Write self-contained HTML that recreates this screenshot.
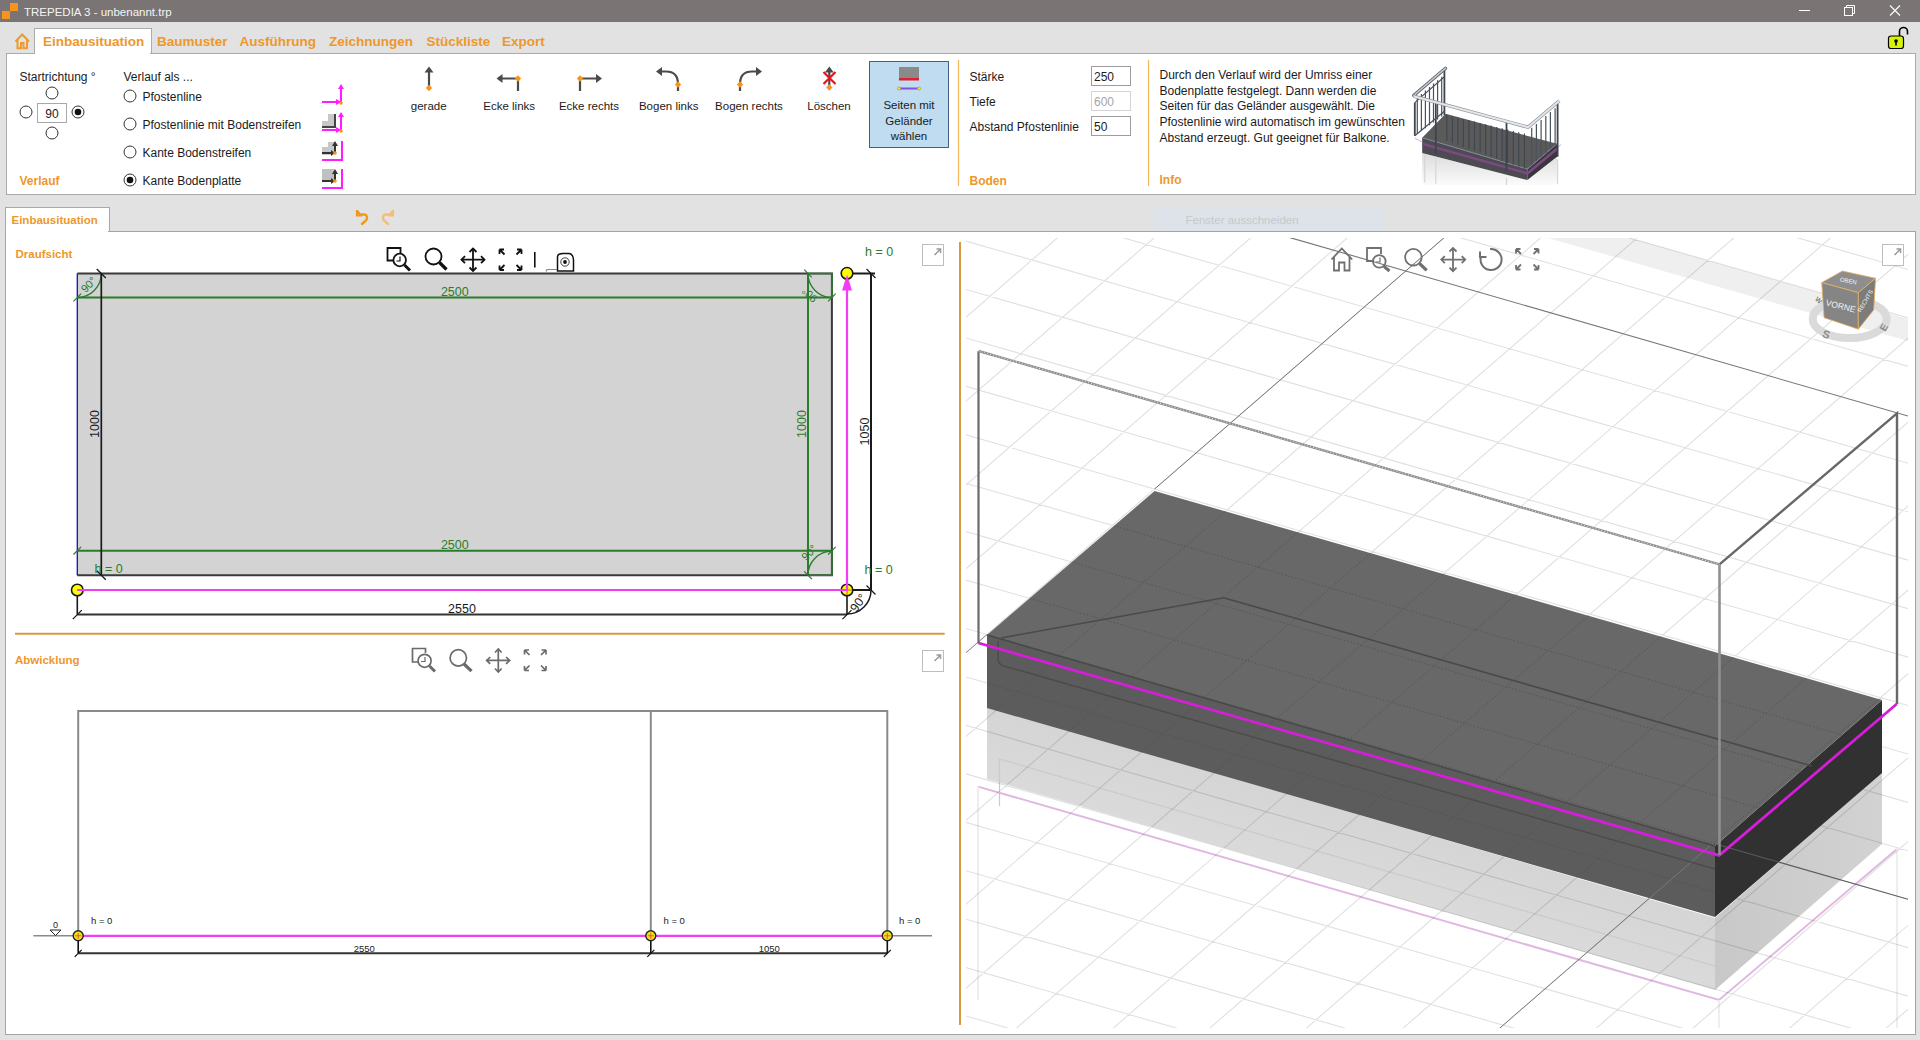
<!DOCTYPE html>
<html lang="de"><head><meta charset="utf-8"><title>TREPEDIA 3 - unbenannt.trp</title>
<style>
html,body{margin:0;padding:0;}
body{width:1920px;height:1040px;overflow:hidden;background:#e2e2e2;font-family:"Liberation Sans", sans-serif;position:relative;}
.t{position:absolute;line-height:1;white-space:pre;}
.abs{position:absolute;}
svg{position:absolute;overflow:visible;}
</style></head><body>

<div class="abs" id="titlebar" style="left:0;top:0;width:1920px;height:22px;background:#7a7474;"></div>
<div class="abs" style="left:2px;top:11px;width:8px;height:8px;background:#f7941d;"></div>
<div class="abs" style="left:10px;top:3px;width:8px;height:8px;background:#f7941d;"></div>
<div class="t" style="left:24.0px;top:6.9px;font-size:11.5px;color:#f4f4f4;">TREPEDIA 3 - unbenannt.trp</div>
<svg style="left:0;top:0" width="1920" height="22">
<line x1="1799" y1="10.5" x2="1810" y2="10.5" stroke="#fff" stroke-width="1"/>
<rect x="1844.5" y="7.5" width="8" height="8" fill="none" stroke="#fff" stroke-width="1"/>
<path d="M1846.5 7.5 V5.5 H1854.5 V13.5 H1852.5" fill="none" stroke="#fff" stroke-width="1"/>
<path d="M1890 5.5 L1900 15.5 M1900 5.5 L1890 15.5" stroke="#fff" stroke-width="1.1"/>
</svg>
<div class="abs" style="left:0;top:22px;width:1920px;height:32px;background:#e2e2e2;"></div>
<div class="abs" style="left:34px;top:28px;width:116px;height:26px;background:#fff;border:1px solid #ababab;border-bottom:none;"></div>
<svg style="left:0;top:0" width="60" height="60">
<path d="M15.5 41.5 L22.2 34.5 L29 41.5 M17.5 39.5 V48.2 H21 V43 H23.5 V48.2 H27 V39.5" fill="none" stroke="#ef9a2a" stroke-width="2" stroke-linejoin="miter"/>
</svg>
<div class="t" style="left:43.0px;top:35.2px;font-size:13.5px;color:#ee972c;font-weight:bold;">Einbausituation</div>
<div class="t" style="left:157.0px;top:35.2px;font-size:13.5px;color:#ee972c;font-weight:bold;">Baumuster</div>
<div class="t" style="left:239.5px;top:35.2px;font-size:13.5px;color:#ee972c;font-weight:bold;">Ausführung</div>
<div class="t" style="left:329.0px;top:35.2px;font-size:13.5px;color:#ee972c;font-weight:bold;">Zeichnungen</div>
<div class="t" style="left:426.5px;top:35.2px;font-size:13.5px;color:#ee972c;font-weight:bold;">Stückliste</div>
<div class="t" style="left:502.0px;top:35.2px;font-size:13.5px;color:#ee972c;font-weight:bold;">Export</div>
<svg style="left:0;top:0" width="1920" height="60">
<path d="M1899.5 36 V31.5 A4 4 0 0 1 1907.5 31.5 V34.5" fill="none" stroke="#000" stroke-width="1.6"/>
<rect x="1888.5" y="36" width="15" height="12.5" rx="2.5" fill="#d7f20a" stroke="#000" stroke-width="1.2"/>
<circle cx="1896" cy="41" r="1.8" fill="#000"/><rect x="1895.2" y="41" width="1.6" height="4.5" fill="#000"/>
</svg>
<div class="abs" id="ribbon" style="left:6px;top:53px;width:1908px;height:140px;background:#fff;border:1px solid #ababab;"></div>
<div class="abs" style="left:35px;top:52px;width:115px;height:2px;background:#fff;"></div>
<svg style="left:0;top:0" width="400" height="200"><circle cx="52" cy="93" r="6" fill="#fff" stroke="#333" stroke-width="1"/><circle cx="26" cy="112" r="6" fill="#fff" stroke="#333" stroke-width="1"/><circle cx="78" cy="112" r="6" fill="#fff" stroke="#333" stroke-width="1"/><circle cx="78" cy="112" r="3.3" fill="#111"/><circle cx="52" cy="133" r="6" fill="#fff" stroke="#333" stroke-width="1"/><rect x="37.5" y="103.5" width="29" height="19" fill="#fff" stroke="#a8a8a8" stroke-width="1"/><circle cx="130" cy="96" r="6" fill="#fff" stroke="#333" stroke-width="1"/><circle cx="130" cy="124" r="6" fill="#fff" stroke="#333" stroke-width="1"/><circle cx="130" cy="152" r="6" fill="#fff" stroke="#333" stroke-width="1"/><circle cx="130" cy="180" r="6" fill="#fff" stroke="#333" stroke-width="1"/><circle cx="130" cy="180" r="3.3" fill="#111"/><g>
<path d="M322 102 H340" stroke="#ff1dff" stroke-width="2"/><path d="M336 99 L341 102 L336 105Z" fill="#ff1dff"/>
<path d="M341 103 V87" stroke="#ff1dff" stroke-width="2"/><path d="M338 89 L341 84 L344 89Z" fill="#ff1dff"/>
<circle cx="341" cy="103" r="1.8" fill="#f7941d"/>
</g>
<g>
<rect x="322" y="121" width="12" height="5" fill="#c8c8c8"/><rect x="328" y="114" width="6" height="12" fill="#c8c8c8"/>
<path d="M322 127 H335 V114" fill="none" stroke="#444" stroke-width="2"/>
<path d="M322 130 H340" stroke="#ff1dff" stroke-width="2"/><path d="M336 127 L341 130 L336 133Z" fill="#ff1dff"/>
<path d="M341 131 V115" stroke="#ff1dff" stroke-width="2"/><path d="M338 117 L341 112 L344 117Z" fill="#ff1dff"/>
<circle cx="341" cy="131" r="1.8" fill="#f7941d"/>
</g>
<g>
<rect x="322" y="147" width="10" height="8" fill="#c8c8c8"/><rect x="328" y="142" width="6" height="12" fill="#c8c8c8"/>
<path d="M322 153 H334" stroke="#333" stroke-width="2"/><path d="M331 150 L335 153 L331 156Z" fill="#333"/>
<path d="M335 153 V144" stroke="#333" stroke-width="2"/><path d="M332 146 L335 141 L338 146Z" fill="#333"/>
<circle cx="335" cy="153" r="1.8" fill="#f7941d"/>
<path d="M322 160 H342 V141" fill="none" stroke="#ff1dff" stroke-width="2"/>
</g>
<g>
<rect x="322" y="169" width="12" height="12" fill="#c0c0c0"/>
<path d="M322 181 H334" stroke="#333" stroke-width="2"/><path d="M331 178 L335 181 L331 184Z" fill="#333"/>
<path d="M335 181 V172" stroke="#333" stroke-width="2"/><path d="M332 174 L335 169 L338 174Z" fill="#333"/>
<circle cx="335" cy="181" r="1.8" fill="#f7941d"/>
<path d="M322 188 H342 V169" fill="none" stroke="#ff1dff" stroke-width="2"/>
</g></svg>
<div class="t" style="left:19.5px;top:71.4px;font-size:12px;color:#1b1b1b;">Startrichtung °</div>
<div class="t" style="left:-248.0px;width:600px;text-align:center;top:108.4px;font-size:12px;color:#1b1b1b;">90</div>
<div class="t" style="left:19.5px;top:174.9px;font-size:12px;color:#ee972c;font-weight:bold;">Verlauf</div>
<div class="t" style="left:123.5px;top:71.4px;font-size:12px;color:#1b1b1b;">Verlauf als ...</div>
<div class="t" style="left:142.5px;top:90.9px;font-size:12px;color:#1b1b1b;">Pfostenline</div>
<div class="t" style="left:142.5px;top:118.9px;font-size:12px;color:#1b1b1b;">Pfostenlinie mit Bodenstreifen</div>
<div class="t" style="left:142.5px;top:146.9px;font-size:12px;color:#1b1b1b;">Kante Bodenstreifen</div>
<div class="t" style="left:142.5px;top:174.9px;font-size:12px;color:#1b1b1b;">Kante Bodenplatte</div>
<svg style="left:0;top:0" width="1000" height="200"><path d="M429 88 V71" stroke="#4a4a4a" stroke-width="2.2"/><path d="M424.5 72.5 L429 66.5 L433.5 72.5Z" fill="#4a4a4a"/><path d="M429 84.8 L432.2 88 L429 91.2 L425.8 88Z" fill="#f7941d"/><path d="M500 78.5 H518 V91" fill="none" stroke="#4a4a4a" stroke-width="2.2"/><path d="M502.5 74 L496.5 78.5 L502.5 83Z" fill="#4a4a4a"/><path d="M518 75.3 L521.2 78.5 L518 81.7 L514.8 78.5Z" fill="#f7941d"/><path d="M580 91 V78.5 H598" fill="none" stroke="#4a4a4a" stroke-width="2.2"/><path d="M596 74 L602 78.5 L596 83Z" fill="#4a4a4a"/><path d="M580 75.3 L583.2 78.5 L580 81.7 L576.8 78.5Z" fill="#f7941d"/><path d="M678 91 V84 C678 76 674 71.5 666 71.5 H660" fill="none" stroke="#4a4a4a" stroke-width="2.2"/><path d="M662 67 L656 71.5 L662 76Z" fill="#4a4a4a"/><path d="M678 81.3 L681.2 84.5 L678 87.7 L674.8 84.5Z" fill="#f7941d"/><path d="M740 91 V84 C740 76 744 71.5 752 71.5 H758" fill="none" stroke="#4a4a4a" stroke-width="2.2"/><path d="M756 67 L762 71.5 L756 76Z" fill="#4a4a4a"/><path d="M740 81.3 L743.2 84.5 L740 87.7 L736.8 84.5Z" fill="#f7941d"/><path d="M829.3 88 V71" stroke="#4a4a4a" stroke-width="2.2"/><path d="M824.8 72.5 L829.3 66.5 L833.8 72.5Z" fill="#4a4a4a"/><path d="M829.3 84.3 L832.5 87.5 L829.3 90.7 L826.0999999999999 87.5Z" fill="#f7941d"/><path d="M823.5 72 L835.5 84 M835.5 72 L823.5 84" stroke="#e8141c" stroke-width="2.2"/><rect x="869.5" y="61.5" width="79" height="86" fill="#bfdcf1" stroke="#44607e" stroke-width="1"/><rect x="899" y="67" width="20" height="11" fill="#8a8a8a"/><rect x="899" y="78" width="20" height="2.5" fill="#e0202a"/><path d="M899 88.5 H919" stroke="#8050e0" stroke-width="2"/><circle cx="899" cy="88.5" r="1.6" fill="#f4e040" stroke="#b09030" stroke-width="0.6"/><circle cx="919" cy="88.5" r="1.6" fill="#f4e040" stroke="#b09030" stroke-width="0.6"/><path d="M958.5 60 V186" stroke="#f2b75a" stroke-width="1.2"/></svg>
<div class="t" style="left:128.7px;width:600px;text-align:center;top:100.6px;font-size:11.5px;color:#1b1b1b;">gerade</div>
<div class="t" style="left:209.2px;width:600px;text-align:center;top:100.6px;font-size:11.5px;color:#1b1b1b;">Ecke links</div>
<div class="t" style="left:289.0px;width:600px;text-align:center;top:100.6px;font-size:11.5px;color:#1b1b1b;">Ecke rechts</div>
<div class="t" style="left:368.7px;width:600px;text-align:center;top:100.6px;font-size:11.5px;color:#1b1b1b;">Bogen links</div>
<div class="t" style="left:449.0px;width:600px;text-align:center;top:100.6px;font-size:11.5px;color:#1b1b1b;">Bogen rechts</div>
<div class="t" style="left:529.0px;width:600px;text-align:center;top:100.6px;font-size:11.5px;color:#1b1b1b;">Löschen</div>
<div class="t" style="left:609.0px;width:600px;text-align:center;top:100.4px;font-size:11.5px;color:#1b1b1b;">Seiten mit</div>
<div class="t" style="left:609.0px;width:600px;text-align:center;top:116.2px;font-size:11.5px;color:#1b1b1b;">Geländer</div>
<div class="t" style="left:609.0px;width:600px;text-align:center;top:130.7px;font-size:11.5px;color:#1b1b1b;">wählen</div>
<svg style="left:0;top:0" width="1200" height="200"><rect x="1091.5" y="66.5" width="39" height="19" fill="#fff" stroke="#9c9c9c"/><rect x="1091.5" y="91.5" width="39" height="19" fill="#fff" stroke="#d4d4d4"/><rect x="1091.5" y="116.5" width="39" height="19" fill="#fff" stroke="#9c9c9c"/><path d="M1148.5 60 V186" stroke="#f2b75a" stroke-width="1.2"/></svg>
<div class="t" style="left:969.5px;top:71.0px;font-size:12px;color:#1b1b1b;">Stärke</div>
<div class="t" style="left:969.5px;top:96.3px;font-size:12px;color:#1b1b1b;">Tiefe</div>
<div class="t" style="left:969.5px;top:121.4px;font-size:12px;color:#1b1b1b;">Abstand Pfostenlinie</div>
<div class="t" style="left:1094.0px;top:71.0px;font-size:12px;color:#1b1b1b;">250</div>
<div class="t" style="left:1094.0px;top:96.3px;font-size:12px;color:#a6a6a6;">600</div>
<div class="t" style="left:1094.0px;top:121.4px;font-size:12px;color:#1b1b1b;">50</div>
<div class="t" style="left:969.5px;top:175.4px;font-size:12px;color:#ee972c;font-weight:bold;">Boden</div>
<div class="t" style="left:1159.5px;top:68.7px;font-size:12px;color:#1b1b1b;">Durch den Verlauf wird der Umriss einer</div>
<div class="t" style="left:1159.5px;top:84.5px;font-size:12px;color:#1b1b1b;">Bodenplatte festgelegt. Dann werden die</div>
<div class="t" style="left:1159.5px;top:100.2px;font-size:12px;color:#1b1b1b;">Seiten für das Geländer ausgewählt. Die</div>
<div class="t" style="left:1159.5px;top:116.0px;font-size:12px;color:#1b1b1b;">Pfostenlinie wird automatisch im gewünschten</div>
<div class="t" style="left:1159.5px;top:131.7px;font-size:12px;color:#1b1b1b;">Abstand erzeugt. Gut geeignet für Balkone.</div>
<div class="t" style="left:1159.5px;top:174.4px;font-size:12px;color:#ee972c;font-weight:bold;">Info</div>
<svg style="left:0;top:0" width="1600" height="200"><defs><linearGradient id="brefl" x1="0" y1="0" x2="0" y2="1"><stop offset="0" stop-color="#dcdcdc"/><stop offset="1" stop-color="#fbfbfb"/></linearGradient></defs><path d="M1422.2 153.1 L1527.4 180.1 L1557.0 156.7 L1557.0 185.0 L1527.4 185.0 L1422.2 185.0Z" fill="url(#brefl)"/><path d="M1424.7 155.5 L1424.7 182.6 M1435.8 158.0 L1435.8 183.8 M1506.5 177.7 L1506.5 185.0 M1557.6 159.2 L1557.6 183.8" stroke="#d6d6d6" stroke-width="1.2"/><path d="M1422.2 137.7 L1445.6 113.7 L1557.0 143.8 L1527.4 169.1Z" fill="#5a5a5a"/><path d="M1422.2 137.7 L1527.4 169.1 L1527.4 180.1 L1422.2 153.1Z" fill="#4e4a52"/><path d="M1527.4 169.1 L1557.0 143.8 L1557.0 156.7 L1527.4 180.1Z" fill="#3a363e"/><path d="M1422.2 143.8 L1527.4 173.4 M1527.4 173.4 L1557.0 148.7" stroke="#7a4a80" stroke-width="2.6"/><path d="M1422.2 137.7 L1527.4 169.1 L1557.0 143.8" fill="none" stroke="#7a8a96" stroke-width="1"/><path d="M1414.8 138.3 L1422.2 142.0 M1557.0 148.1 L1561.3 144.4" stroke="#d8a8e0" stroke-width="1"/><path d="M1446.8 114.9 L1446.8 140.7 M1452.4 116.2 L1452.4 142.7 M1457.9 117.6 L1457.9 144.7 M1463.4 118.9 L1463.4 146.7 M1469.0 120.2 L1469.0 148.7 M1474.5 121.6 L1474.5 150.7 M1480.1 122.9 L1480.1 152.7 M1485.6 124.2 L1485.6 154.7 M1491.1 125.5 L1491.1 156.7 M1496.7 126.9 L1496.7 158.7 M1502.2 128.2 L1502.2 160.7 M1507.7 129.5 L1507.7 162.7 M1513.3 130.9 L1513.3 164.7 M1518.8 132.2 L1518.8 166.7 M1524.4 133.5 L1524.4 168.7" stroke="#3e4650" stroke-width="1.1"/><path d="M1417.3 97.4 L1417.3 134.1 M1421.4 94.0 L1421.4 131.1 M1425.4 90.5 L1425.4 128.2 M1429.5 87.1 L1429.5 125.3 M1433.5 83.6 L1433.5 122.4 M1437.6 80.2 L1437.6 119.4 M1441.7 76.7 L1441.7 116.5" stroke="#4a525c" stroke-width="1.2"/><path d="M1531.7 127.8 L1531.7 164.7 M1536.4 123.9 L1536.4 160.8 M1541.1 120.0 L1541.1 156.9 M1545.8 116.0 L1545.8 152.9 M1550.4 112.1 L1550.4 149.0 M1555.1 108.2 L1555.1 145.1" stroke="#4a525c" stroke-width="1.2"/><path d="M1444.4 69.4 L1444.4 114.9 M1414.8 102.6 L1414.8 135.8 M1435.8 102.6 L1435.8 154.3 M1506.5 122.3 L1506.5 171.5 M1557.6 103.8 L1557.6 156.7" stroke="#3c4450" stroke-width="1.8"/><path d="M1414.8 135.8 L1444.4 111.2 M1414.8 102.6 L1444.4 76.8" stroke="#4a525c" stroke-width="1.2"/><path d="M1413.6 95.5 L1445.6 68.2" stroke="#5a626c" stroke-width="3.2" stroke-linecap="round"/><path d="M1413.6 95.5 L1445.6 68.2" stroke="#c4c8cc" stroke-width="1.6" stroke-linecap="round"/><path d="M1413.6 96.2 L1528.0 127.2 L1559.4 100.8" fill="none" stroke="#8a9098" stroke-width="3.4" stroke-linejoin="round"/><path d="M1413.6 96.2 L1528.0 127.2 L1559.4 100.8" fill="none" stroke="#e4e6e8" stroke-width="2" stroke-linejoin="round"/></svg>
<div class="abs" style="left:5px;top:207px;width:103px;height:26px;background:#fff;border:1px solid #a8a8a8;border-bottom:none;"></div>
<div class="t" style="left:11.5px;top:214.9px;font-size:11.5px;color:#ee972c;font-weight:bold;">Einbausituation</div>
<svg style="left:0;top:0" width="420" height="240">
<path d="M357.5 211.5 L360 214.5 H364 C367 214.5 368 218 366 220.5 L362 224" fill="none" stroke="#f09a1a" stroke-width="2.4" stroke-linecap="round"/>
<path d="M357 210 V215.5 H362" fill="none" stroke="#f09a1a" stroke-width="2.2"/>
<path d="M392.5 211.5 L390 214.5 H386 C383 214.5 382 218 384 220.5 L388 224" fill="none" stroke="#f5bd77" stroke-width="2.4" stroke-linecap="round"/>
<path d="M393 210 V215.5 H388" fill="none" stroke="#f5bd77" stroke-width="2.2"/>
</svg>
<div class="abs" style="left:1153px;top:208px;width:230px;height:23px;background:#dde3e9;"></div>
<div class="t" style="left:1185.5px;top:214.9px;font-size:11.5px;color:#c6c9cc;">Fenster ausschneiden</div>
<div class="abs" id="content" style="left:5px;top:231px;width:1909px;height:802px;background:#fff;border:1px solid #a4a4a4;"></div>
<div class="abs" style="left:6px;top:230px;width:102px;height:2px;background:#fff;"></div>
<div class="t" style="left:15.5px;top:248.6px;font-size:11.5px;color:#ee972c;font-weight:bold;">Draufsicht</div>
<div class="t" style="left:15.0px;top:654.9px;font-size:11.5px;color:#ee972c;font-weight:bold;">Abwicklung</div>
<svg id="draufsicht" style="left:0;top:0" width="960" height="640"><g fill="none" stroke="#111" stroke-width="1.8">
<path d="M394 260.5 H387.5 V248 H400.5 V253"/>
<circle cx="399.7" cy="260" r="6.3"/><path d="M404.5 265 L410 270.5" stroke-width="3"/>
<path d="M396.5 261 H400 V256.5" stroke-width="1.2"/>
<circle cx="433.5" cy="256.5" r="8"/><path d="M439.5 262.5 L446.5 269.5" stroke-width="3.2"/>
<path d="M473 248.5 V271 M461.5 259.7 H484.5"/>
<path d="M469.5 252 L473 248.5 L476.5 252 M469.5 267.5 L473 271 L476.5 267.5 M465 256.2 L461.5 259.7 L465 263.2 M481 256.2 L484.5 259.7 L481 263.2"/>
<path d="M499.5 249.5 L504.5 254.5 M499.5 249.5 V254 M499.5 249.5 H504"/>
<path d="M521.5 249.5 L516.5 254.5 M521.5 249.5 V254 M521.5 249.5 H517"/>
<path d="M499.5 270 L504.5 265 M499.5 270 V265.5 M499.5 270 H504"/>
<path d="M521.5 270 L516.5 265 M521.5 270 V265.5 M521.5 270 H517"/>
<path d="M534.8 252 V267.5" stroke-width="1.6"/>
<path d="M557.5 271 V257 C557.5 254 560 253.5 563 253.5 H569 C572 253.5 573.5 257 573.5 260 V271 Z" stroke-width="1.5"/>
<circle cx="565" cy="262" r="4.2" stroke-width="0.8"/><circle cx="565" cy="262" r="1" fill="#111"/>
<path d="M546 271.5 L547 269.5 H557" stroke="#888" stroke-width="1.2"/>
</g><rect x="77.3" y="273.5" width="754.6" height="301.7" fill="#d3d3d3"/><path d="M77.3 273.5 H831.9 V575.2 H77.3" fill="none" stroke="#3a3a3a" stroke-width="2"/><path d="M77.3 273.5 V575.2" stroke="#1010c0" stroke-width="1.3"/><path d="M77.3 297.5 H831.9 M77.3 550.7 H831.9 M808 273.5 V575.2" stroke="#2a7d2a" stroke-width="2"/><path d="M808 273.5 H831.9 V297.5" fill="none" stroke="#2a7d2a" stroke-width="1.6"/><path d="M808 575.2 H831.9 V550.7" fill="none" stroke="#2a7d2a" stroke-width="1.6"/><path d="M101.3 273.5 A24 24 0 0 1 77.3 297.5" fill="none" stroke="#2a7d2a" stroke-width="1.3"/><path d="M808 273.5 A24 24 0 0 0 831.9 297.5" fill="none" stroke="#2a7d2a" stroke-width="1.3"/><path d="M808 575.2 A24 24 0 0 1 831.9 551.2" fill="none" stroke="#2a7d2a" stroke-width="1.3"/><path d="M73.5 301.3 L81.1 293.7" stroke="#2a7d2a" stroke-width="1.2"/><path d="M73.5 554.5 L81.1 546.9000000000001" stroke="#2a7d2a" stroke-width="1.2"/><path d="M828.1 301.3 L835.6999999999999 293.7" stroke="#2a7d2a" stroke-width="1.2"/><path d="M828.1 554.5 L835.6999999999999 546.9000000000001" stroke="#2a7d2a" stroke-width="1.2"/><path d="M804.2 269.7 L811.8 277.3" stroke="#2a7d2a" stroke-width="1.2"/><path d="M804.2 571.4000000000001 L811.8 579.0" stroke="#2a7d2a" stroke-width="1.2"/><path d="M101.3 273.5 V575.2" stroke="#1a1a1a" stroke-width="1.7"/><path d="M96.8 269.0 L105.8 278.0" stroke="#1a1a1a" stroke-width="1.3"/><path d="M96.8 570.7 L105.8 579.7" stroke="#1a1a1a" stroke-width="1.3"/><path d="M847 273.5 H875 M871 273.5 V590 M847 590 H871" fill="none" stroke="#1a1a1a" stroke-width="2"/><path d="M866.5 269.0 L875.5 278.0" stroke="#1a1a1a" stroke-width="1.3"/><path d="M866.5 585.5 L875.5 594.5" stroke="#1a1a1a" stroke-width="1.3"/><path d="M77.3 614.6 H847" stroke="#333" stroke-width="2"/><path d="M77.3 590 V614.6 M847 590 V614.6" stroke="#1a1a1a" stroke-width="1.6"/><path d="M72.8 619.1 L81.8 610.1" stroke="#1a1a1a" stroke-width="1.3"/><path d="M842.5 619.1 L851.5 610.1" stroke="#1a1a1a" stroke-width="1.3"/><path d="M871 590 A24 24 0 0 1 847 614" fill="none" stroke="#1a1a1a" stroke-width="1.5"/><circle cx="77.3" cy="590" r="5.8" fill="#ffff00" stroke="#1a1a1a" stroke-width="1.6"/><circle cx="847" cy="590" r="5.8" fill="#ffff00" stroke="#1a1a1a" stroke-width="1.6"/><circle cx="847" cy="273.3" r="5.8" fill="#ffff00" stroke="#1a1a1a" stroke-width="1.6"/><path d="M77.3 590 H83" stroke="#f04040" stroke-width="1"/><path d="M847 585 V595 M842 590 H852" stroke="#e05030" stroke-width="1"/><path d="M77.3 590 H847 V284" fill="none" stroke="#f43cf4" stroke-width="2.2"/><path d="M842 290.5 L847 274.5 L852 290.5 Z" fill="#f43cf4"/><text x="454.8" y="295.6" font-size="12.5" fill="#2a7d2a" text-anchor="middle" style="font-family:'Liberation Sans', sans-serif;">2500</text><text x="454.8" y="548.8" font-size="12.5" fill="#2a7d2a" text-anchor="middle" style="font-family:'Liberation Sans', sans-serif;">2500</text><text x="462" y="612.7" font-size="12.5" fill="#1a1a1a" text-anchor="middle" style="font-family:'Liberation Sans', sans-serif;">2550</text><text transform="translate(99.3 424) rotate(-90)" font-size="12.5" fill="#1a1a1a" text-anchor="middle" style="font-family:'Liberation Sans', sans-serif;">1000</text><text transform="translate(805.8 424) rotate(-90)" font-size="12.5" fill="#2a7d2a" text-anchor="middle" style="font-family:'Liberation Sans', sans-serif;">1000</text><text transform="translate(869 431.5) rotate(-90)" font-size="12.5" fill="#1a1a1a" text-anchor="middle" style="font-family:'Liberation Sans', sans-serif;">1050</text><text x="865" y="256.2" font-size="12.5" fill="#2a7d2a" style="font-family:'Liberation Sans', sans-serif;">h = 0</text><text x="864.6" y="573.8" font-size="12.5" fill="#2a7d2a" style="font-family:'Liberation Sans', sans-serif;">h = 0</text><text x="94.6" y="573" font-size="12.5" fill="#2a7d2a" style="font-family:'Liberation Sans', sans-serif;">h = 0</text><text transform="translate(88.5 284.5) rotate(-45)" font-size="11" fill="#2a7d2a" text-anchor="middle" dominant-baseline="central" style="font-family:'Liberation Sans', sans-serif;">90°</text><text transform="translate(809.5 295) rotate(225)" font-size="11" fill="#2a7d2a" text-anchor="middle" dominant-baseline="central" style="font-family:'Liberation Sans', sans-serif;">90°</text><text transform="translate(809 552.5) rotate(-45)" font-size="11" fill="#2a7d2a" text-anchor="middle" dominant-baseline="central" style="font-family:'Liberation Sans', sans-serif;">90°</text><text transform="translate(858.5 603) rotate(-54)" font-size="12.5" fill="#1a1a1a" text-anchor="middle" dominant-baseline="central" style="font-family:'Liberation Sans', sans-serif;">90°</text><rect x="922.5" y="244.5" width="21" height="21" fill="#fff" stroke="#bdbdbd" stroke-width="1"/><path d="M934.5 255 L940 249.5 M936.5 249 H940.5 V253" fill="none" stroke="#9a9a9a" stroke-width="1.5"/><rect x="922.5" y="650.5" width="21" height="21" fill="#fff" stroke="#bdbdbd" stroke-width="1"/><path d="M934.5 661 L940 655.5 M936.5 655 H940.5 V659" fill="none" stroke="#9a9a9a" stroke-width="1.5"/><path d="M15 633.8 H944.7" stroke="#d9993f" stroke-width="2"/></svg>
<svg id="abwicklung" style="left:0;top:0" width="960" height="1040"><g fill="none" stroke="#6a6a6a" stroke-width="1.7">
<path d="M419 662 H412.5 V648.5 H425.5 V653"/>
<circle cx="424.6" cy="660.8" r="6.5"/><path d="M429.5 666 L435 671.5" stroke-width="3"/>
<path d="M421 661.5 H425 V657" stroke-width="1.2"/>
<circle cx="458.3" cy="657.9" r="8.2"/><path d="M464 664 L471.5 671.2" stroke-width="3.2"/>
<path d="M498.3 649 V672 M486.7 660.4 H509.6"/>
<path d="M495 652.5 L498.3 649 L501.6 652.5 M495 668.5 L498.3 672 L501.6 668.5 M490.2 657 L486.7 660.4 L490.2 663.8 M506.1 657 L509.6 660.4 L506.1 663.8"/>
<path d="M524.5 650 L529.5 655 M524.5 650 V654.5 M524.5 650 H529"/>
<path d="M546 650 L541 655 M546 650 V654.5 M546 650 H541.5"/>
<path d="M524.5 670.5 L529.5 665.5 M524.5 670.5 V666 M524.5 670.5 H529"/>
<path d="M546 670.5 L541 665.5 M546 670.5 V666 M546 670.5 H541.5"/>
</g><path d="M78.2 936 V711 H887.3 V936 M650.8 711 V936" fill="none" stroke="#8a8a8a" stroke-width="2"/><path d="M33.3 935.8 H78 M887 935.8 H932" stroke="#8a8a8a" stroke-width="1.6"/><path d="M78.2 935.8 H887.3" stroke="#f43cf4" stroke-width="2.2"/><path d="M78.2 953.3 H887.3" stroke="#333" stroke-width="2"/><path d="M78.2 936 V953.3 M650.8 936 V953.3 M887.3 936 V953.3" stroke="#111" stroke-width="1.6"/><path d="M74.7 956.8 L81.7 949.8" stroke="#111" stroke-width="1.2"/><circle cx="78.2" cy="935.8" r="5" fill="#f0e020" stroke="#222" stroke-width="1.4"/><path d="M75.2 935.8 H81.2 M78.2 933 V939" stroke="#e05030" stroke-width="0.9"/><path d="M647.3 956.8 L654.3 949.8" stroke="#111" stroke-width="1.2"/><circle cx="650.8" cy="935.8" r="5" fill="#f0e020" stroke="#222" stroke-width="1.4"/><path d="M647.8 935.8 H653.8 M650.8 933 V939" stroke="#e05030" stroke-width="0.9"/><path d="M883.8 956.8 L890.8 949.8" stroke="#111" stroke-width="1.2"/><circle cx="887.3" cy="935.8" r="5" fill="#f0e020" stroke="#222" stroke-width="1.4"/><path d="M884.3 935.8 H890.3 M887.3 933 V939" stroke="#e05030" stroke-width="0.9"/><path d="M50 930 H61 L55.5 935.5 Z" fill="#fff" stroke="#222" stroke-width="1"/><text x="55.5" y="928" font-size="9" fill="#222" text-anchor="middle" style="font-family:'Liberation Sans', sans-serif;">0</text><text x="91" y="923.5" font-size="9.5" fill="#222" style="font-family:'Liberation Sans', sans-serif;">h = 0</text><text x="663.5" y="923.5" font-size="9.5" fill="#222" style="font-family:'Liberation Sans', sans-serif;">h = 0</text><text x="899" y="923.5" font-size="9.5" fill="#222" style="font-family:'Liberation Sans', sans-serif;">h = 0</text><text x="364.2" y="952" font-size="9.5" fill="#222" text-anchor="middle" style="font-family:'Liberation Sans', sans-serif;">2550</text><text x="769.2" y="952" font-size="9.5" fill="#222" text-anchor="middle" style="font-family:'Liberation Sans', sans-serif;">1050</text></svg>
<div class="abs" style="left:959px;top:242px;width:2px;height:783px;background:#d9993f;"></div>
<svg id="view3d" style="left:0;top:0" width="1920" height="1040"><defs><clipPath id="vp"><rect x="966" y="238" width="942" height="790"/></clipPath><linearGradient id="rf1" gradientUnits="userSpaceOnUse" x1="0" y1="422" x2="0" y2="495" gradientTransform="skewY(16.16)"><stop offset="0" stop-color="#d5d5d5"/><stop offset="1" stop-color="#dadada"/></linearGradient><linearGradient id="rf2" gradientUnits="userSpaceOnUse" x1="1715" y1="0" x2="1882" y2="0"><stop offset="0" stop-color="#c8c8c8"/><stop offset="1" stop-color="#d2d2d2"/></linearGradient><clipPath id="slabclip"><path d="M987 635 L1154.6 491 L1882 700 L1715 846 L1715 917 L987 708 Z"/></clipPath></defs><g clip-path="url(#vp)"><path d="M1548 238 L1630 238 L1908 319 L1908 341 Z" fill="#efefef"/><path d="M987 707 L1715 918 L1715 990 L987 779 Z" fill="url(#rf1)"/><path d="M1715 918 L1882 772 L1882 844 L1715 990 Z" fill="url(#rf2)"/><path d="M999.5 806 V759 L1715 966" fill="none" stroke="#cacaca" stroke-width="1.2"/><path d="M978 786.6 L1719 1000 L1897 849" fill="none" stroke="#e0b8e0" stroke-width="2"/><path d="M978 786.6 V1000 M1719 1000 V1028 M1897 849 V1028" stroke="#eeeeee" stroke-width="2.2"/><path d="M111.8 -1457.5 L5193.8 2.7 M69.9 -1421.1 L5151.9 39.1 M27.9 -1384.7 L5109.9 75.5 M-14.0 -1348.3 L5068.0 111.9 M-55.9 -1311.9 L5026.1 148.3 M-97.8 -1275.5 L4984.1 184.7 M-139.8 -1239.2 L4942.2 221.0 M-181.7 -1202.8 L4900.3 257.4 M-223.6 -1166.4 L4858.4 293.8 M-265.6 -1130.0 L4816.4 330.2 M-307.5 -1093.6 L4774.5 366.6 M-349.4 -1057.2 L4732.6 403.0 M-391.4 -1020.8 L4690.6 439.4 M-433.3 -984.4 L4648.7 475.8 M-475.2 -948.0 L4606.8 512.2 M-517.1 -911.6 L4564.9 548.6 M-559.1 -875.3 L4522.9 584.9 M-601.0 -838.9 L4481.0 621.3 M-642.9 -802.5 L4439.1 657.7 M-684.9 -766.1 L4397.1 694.1 M-726.8 -729.7 L4355.2 730.5 M-768.7 -693.3 L4313.3 766.9 M-810.7 -656.9 L4271.3 803.3 M-852.6 -620.5 L4229.4 839.7 M-894.5 -584.1 L4187.5 876.1 M-936.4 -547.8 L4145.6 912.5 M-978.4 -511.4 L4103.6 948.8 M-1020.3 -475.0 L4061.7 985.2 M-1104.2 -402.2 L3977.8 1058.0 M-1146.1 -365.8 L3935.9 1094.4 M-1188.0 -329.4 L3894.0 1130.8 M-1230.0 -293.0 L3852.0 1167.2 M-1271.9 -256.6 L3810.1 1203.6 M-1313.8 -220.2 L3768.2 1240.0 M-1355.8 -183.8 L3726.2 1276.4 M-1397.7 -147.5 L3684.3 1312.7 M-1439.6 -111.1 L3642.4 1349.1 M-1481.5 -74.7 L3600.5 1385.5 M-1523.5 -38.3 L3558.5 1421.9 M-1565.4 -1.9 L3516.6 1458.3 M-1607.3 34.5 L3474.7 1494.7 M-1649.3 70.9 L3432.7 1531.1 M-1691.2 107.3 L3390.8 1567.5 M-1733.1 143.7 L3348.9 1603.9 M-1775.0 180.1 L3306.9 1640.2 M-1817.0 216.4 L3265.0 1676.6 M-1858.9 252.8 L3223.1 1713.0 M-1900.8 289.2 L3181.2 1749.4 M-1942.8 325.6 L3139.2 1785.8 M-1984.7 362.0 L3097.3 1822.2 M-2026.6 398.4 L3055.4 1858.6 M-2068.6 434.8 L3013.4 1895.0 M-2110.5 471.2 L2971.5 1931.4 M-2152.4 507.6 L2929.6 1967.8 M-2194.3 544.0 L2887.7 2004.2 M-2236.3 580.3 L2845.7 2040.5 M-2278.2 616.7 L2803.8 2076.9 M-2320.1 653.1 L2761.9 2113.3 M-2362.1 689.5 L2719.9 2149.7 M111.8 -1457.5 L-2404.0 725.9 M184.4 -1436.6 L-2331.4 746.8 M257.0 -1415.8 L-2258.8 767.6 M329.6 -1394.9 L-2186.2 788.5 M402.2 -1374.1 L-2113.6 809.3 M474.8 -1353.2 L-2041.0 830.2 M547.4 -1332.3 L-1968.4 851.1 M620.0 -1311.5 L-1895.8 871.9 M692.6 -1290.6 L-1823.2 892.8 M765.2 -1269.8 L-1750.6 913.6 M837.8 -1248.9 L-1678.0 934.5 M910.4 -1228.0 L-1605.4 955.4 M983.0 -1207.2 L-1532.8 976.2 M1055.6 -1186.3 L-1460.2 997.1 M1128.2 -1165.5 L-1387.6 1017.9 M1200.8 -1144.6 L-1315.0 1038.8 M1273.4 -1123.7 L-1242.4 1059.7 M1346.0 -1102.9 L-1169.8 1080.5 M1418.6 -1082.0 L-1097.2 1101.4 M1491.2 -1061.2 L-1024.6 1122.2 M1563.8 -1040.3 L-952.0 1143.1 M1636.4 -1019.4 L-879.4 1164.0 M1709.0 -998.6 L-806.8 1184.8 M1781.6 -977.7 L-734.2 1205.7 M1854.2 -956.9 L-661.6 1226.5 M1926.8 -936.0 L-589.0 1247.4 M1999.4 -915.1 L-516.4 1268.3 M2072.0 -894.3 L-443.8 1289.1 M2144.6 -873.4 L-371.2 1310.0 M2217.2 -852.6 L-298.6 1330.8 M2289.8 -831.7 L-226.0 1351.7 M2362.4 -810.8 L-153.4 1372.6 M2435.0 -790.0 L-80.8 1393.4 M2507.6 -769.1 L-8.2 1414.3 M2580.2 -748.3 L64.4 1435.1 M2652.8 -727.4 L137.0 1456.0 M2725.4 -706.5 L209.6 1476.9 M2798.0 -685.7 L282.2 1497.7 M2870.6 -664.8 L354.8 1518.6 M2943.2 -644.0 L427.4 1539.4 M3015.8 -623.1 L500.0 1560.3 M3088.4 -602.2 L572.6 1581.2 M3161.0 -581.4 L645.2 1602.0 M3233.6 -560.5 L717.8 1622.9 M3306.2 -539.7 L790.4 1643.7 M3378.8 -518.8 L863.0 1664.6 M3451.4 -497.9 L935.6 1685.5 M3524.0 -477.1 L1008.2 1706.3 M3596.6 -456.2 L1080.8 1727.2 M3669.2 -435.4 L1153.4 1748.0 M3741.8 -414.5 L1226.0 1768.9 M3814.4 -393.6 L1298.6 1789.8 M3887.0 -372.8 L1371.2 1810.6 M3959.6 -351.9 L1443.8 1831.5 M4032.2 -331.1 L1516.4 1852.3 M4104.8 -310.2 L1589.0 1873.2 M4177.4 -289.3 L1661.6 1894.1 M4250.0 -268.5 L1734.2 1914.9 M4322.6 -247.6 L1806.8 1935.8 M4395.2 -226.8 L1879.4 1956.6 M4467.8 -205.9 L1952.0 1977.5 M4540.4 -185.0 L2024.6 1998.4 M4613.0 -164.2 L2097.2 2019.2 M4685.6 -143.3 L2169.8 2040.1 M4758.2 -122.5 L2242.4 2060.9 M4830.8 -101.6 L2315.0 2081.8 M4903.4 -80.7 L2387.6 2102.7 M4976.0 -59.9 L2460.2 2123.5 M5048.6 -39.0 L2532.8 2144.4 M5121.2 -18.2 L2605.4 2165.2" stroke="#e0e0e0" stroke-width="1.1" fill="none" style="mix-blend-mode:multiply"/><path d="M987 635 L1715 846 L1715 917 L987 708 Z" fill="#5c5c5c"/><path d="M1715 846 L1882 700 L1882 773 L1715 917 Z" fill="#313131"/><path d="M1154.6 491 L1882 700 L1715 846 L987 635 Z" fill="#686868"/><path d="M111.8 -1457.5 L5193.8 2.7 M69.9 -1421.1 L5151.9 39.1 M27.9 -1384.7 L5109.9 75.5 M-14.0 -1348.3 L5068.0 111.9 M-55.9 -1311.9 L5026.1 148.3 M-97.8 -1275.5 L4984.1 184.7 M-139.8 -1239.2 L4942.2 221.0 M-181.7 -1202.8 L4900.3 257.4 M-223.6 -1166.4 L4858.4 293.8 M-265.6 -1130.0 L4816.4 330.2 M-307.5 -1093.6 L4774.5 366.6 M-349.4 -1057.2 L4732.6 403.0 M-391.4 -1020.8 L4690.6 439.4 M-433.3 -984.4 L4648.7 475.8 M-475.2 -948.0 L4606.8 512.2 M-517.1 -911.6 L4564.9 548.6 M-559.1 -875.3 L4522.9 584.9 M-601.0 -838.9 L4481.0 621.3 M-642.9 -802.5 L4439.1 657.7 M-684.9 -766.1 L4397.1 694.1 M-726.8 -729.7 L4355.2 730.5 M-768.7 -693.3 L4313.3 766.9 M-810.7 -656.9 L4271.3 803.3 M-852.6 -620.5 L4229.4 839.7 M-894.5 -584.1 L4187.5 876.1 M-936.4 -547.8 L4145.6 912.5 M-978.4 -511.4 L4103.6 948.8 M-1020.3 -475.0 L4061.7 985.2 M-1104.2 -402.2 L3977.8 1058.0 M-1146.1 -365.8 L3935.9 1094.4 M-1188.0 -329.4 L3894.0 1130.8 M-1230.0 -293.0 L3852.0 1167.2 M-1271.9 -256.6 L3810.1 1203.6 M-1313.8 -220.2 L3768.2 1240.0 M-1355.8 -183.8 L3726.2 1276.4 M-1397.7 -147.5 L3684.3 1312.7 M-1439.6 -111.1 L3642.4 1349.1 M-1481.5 -74.7 L3600.5 1385.5 M-1523.5 -38.3 L3558.5 1421.9 M-1565.4 -1.9 L3516.6 1458.3 M-1607.3 34.5 L3474.7 1494.7 M-1649.3 70.9 L3432.7 1531.1 M-1691.2 107.3 L3390.8 1567.5 M-1733.1 143.7 L3348.9 1603.9 M-1775.0 180.1 L3306.9 1640.2 M-1817.0 216.4 L3265.0 1676.6 M-1858.9 252.8 L3223.1 1713.0 M-1900.8 289.2 L3181.2 1749.4 M-1942.8 325.6 L3139.2 1785.8 M-1984.7 362.0 L3097.3 1822.2 M-2026.6 398.4 L3055.4 1858.6 M-2068.6 434.8 L3013.4 1895.0 M-2110.5 471.2 L2971.5 1931.4 M-2152.4 507.6 L2929.6 1967.8 M-2194.3 544.0 L2887.7 2004.2 M-2236.3 580.3 L2845.7 2040.5 M-2278.2 616.7 L2803.8 2076.9 M-2320.1 653.1 L2761.9 2113.3 M-2362.1 689.5 L2719.9 2149.7 M111.8 -1457.5 L-2404.0 725.9 M184.4 -1436.6 L-2331.4 746.8 M257.0 -1415.8 L-2258.8 767.6 M329.6 -1394.9 L-2186.2 788.5 M402.2 -1374.1 L-2113.6 809.3 M474.8 -1353.2 L-2041.0 830.2 M547.4 -1332.3 L-1968.4 851.1 M620.0 -1311.5 L-1895.8 871.9 M692.6 -1290.6 L-1823.2 892.8 M765.2 -1269.8 L-1750.6 913.6 M837.8 -1248.9 L-1678.0 934.5 M910.4 -1228.0 L-1605.4 955.4 M983.0 -1207.2 L-1532.8 976.2 M1055.6 -1186.3 L-1460.2 997.1 M1128.2 -1165.5 L-1387.6 1017.9 M1200.8 -1144.6 L-1315.0 1038.8 M1273.4 -1123.7 L-1242.4 1059.7 M1346.0 -1102.9 L-1169.8 1080.5 M1418.6 -1082.0 L-1097.2 1101.4 M1491.2 -1061.2 L-1024.6 1122.2 M1563.8 -1040.3 L-952.0 1143.1 M1636.4 -1019.4 L-879.4 1164.0 M1709.0 -998.6 L-806.8 1184.8 M1781.6 -977.7 L-734.2 1205.7 M1854.2 -956.9 L-661.6 1226.5 M1926.8 -936.0 L-589.0 1247.4 M1999.4 -915.1 L-516.4 1268.3 M2072.0 -894.3 L-443.8 1289.1 M2144.6 -873.4 L-371.2 1310.0 M2217.2 -852.6 L-298.6 1330.8 M2289.8 -831.7 L-226.0 1351.7 M2362.4 -810.8 L-153.4 1372.6 M2435.0 -790.0 L-80.8 1393.4 M2507.6 -769.1 L-8.2 1414.3 M2580.2 -748.3 L64.4 1435.1 M2652.8 -727.4 L137.0 1456.0 M2725.4 -706.5 L209.6 1476.9 M2798.0 -685.7 L282.2 1497.7 M2870.6 -664.8 L354.8 1518.6 M2943.2 -644.0 L427.4 1539.4 M3015.8 -623.1 L500.0 1560.3 M3088.4 -602.2 L572.6 1581.2 M3161.0 -581.4 L645.2 1602.0 M3233.6 -560.5 L717.8 1622.9 M3306.2 -539.7 L790.4 1643.7 M3378.8 -518.8 L863.0 1664.6 M3451.4 -497.9 L935.6 1685.5 M3524.0 -477.1 L1008.2 1706.3 M3596.6 -456.2 L1080.8 1727.2 M3669.2 -435.4 L1153.4 1748.0 M3741.8 -414.5 L1226.0 1768.9 M3814.4 -393.6 L1298.6 1789.8 M3887.0 -372.8 L1371.2 1810.6 M3959.6 -351.9 L1443.8 1831.5 M4032.2 -331.1 L1516.4 1852.3 M4104.8 -310.2 L1589.0 1873.2 M4177.4 -289.3 L1661.6 1894.1 M4250.0 -268.5 L1734.2 1914.9 M4322.6 -247.6 L1806.8 1935.8 M4395.2 -226.8 L1879.4 1956.6 M4467.8 -205.9 L1952.0 1977.5 M4540.4 -185.0 L2024.6 1998.4 M4613.0 -164.2 L2097.2 2019.2 M4685.6 -143.3 L2169.8 2040.1 M4758.2 -122.5 L2242.4 2060.9 M4830.8 -101.6 L2315.0 2081.8 M4903.4 -80.7 L2387.6 2102.7 M4976.0 -59.9 L2460.2 2123.5 M5048.6 -39.0 L2532.8 2144.4 M5121.2 -18.2 L2605.4 2165.2" stroke="#4e4e4e" stroke-width="1" stroke-dasharray="1.5 2" fill="none" clip-path="url(#slabclip)" opacity="0.7"/><path d="M1154.6 489.0 L1741.6 -20.5" stroke="#767676" stroke-width="1"/><path d="M1290 237.6 L1908 416" stroke="#777777" stroke-width="1.1"/><path d="M1712.9 843.2 L2874.5 1176.9" stroke="#5c5c5c" stroke-width="1.1"/><path d="M1712.9 843.2 L790.4 1643.7" stroke="#7a7a7a" stroke-width="1"/><path d="M986.9 634.6 L819.1 780.1" stroke="#8a8a8a" stroke-width="1"/><path d="M1001 638 L1223.6 597.7 L1812 766" fill="none" stroke="#4a4a4a" stroke-width="1.6"/><path d="M998 641 V659 Q998 664 1004 666 L1715 869" fill="none" stroke="#4c4c4c" stroke-width="1.6"/><path d="M987 635 L1715 846" stroke="#474747" stroke-width="1.4"/><path d="M978.5 643 L1719.2 855.4 L1896.7 704" fill="none" stroke="#d41ed8" stroke-width="2.8"/><path d="M978.5 643.5 V351" fill="none" stroke="#6a6a6a" stroke-width="2.2"/><path d="M1719.5 564.4 L1897 413.3 V704" fill="none" stroke="#686868" stroke-width="2.4"/><path d="M1719.5 564.4 V855" stroke="#909090" stroke-width="2.6"/><path d="M978.5 351 L1719.5 564.4" stroke="#8e8e8e" stroke-width="2.4"/><path d="M978.5 351 L1719.5 564.4" stroke="#e8e8e8" stroke-width="1" stroke-dasharray="1 2"/></g><g fill="none" stroke="#707070" stroke-width="1.8">
<path d="M1331.5 259.5 L1341.8 248.5 L1352.2 259.5 M1334 257 V270.5 H1339 V262.5 H1344.5 V270.5 H1349.5 V257"/>
<path d="M1373.5 261 H1367 V248 H1381 V254"/>
<circle cx="1379.3" cy="261.4" r="6.3"/><path d="M1384 266.5 L1389.5 271" stroke-width="3"/>
<path d="M1376 262 H1380 V257.5" stroke-width="1.2"/>
<circle cx="1413.4" cy="257.2" r="8.3"/><path d="M1419.5 263.5 L1426.7 270.3" stroke-width="3.2"/>
<path d="M1453 248 V271.2 M1441.3 259.6 H1465.2"/>
<path d="M1449.5 251.5 L1453 248 L1456.5 251.5 M1449.5 267.7 L1453 271.2 L1456.5 267.7 M1444.8 256.1 L1441.3 259.6 L1444.8 263.1 M1461.7 256.1 L1465.2 259.6 L1461.7 263.1"/>
<path d="M1481.2 256 A10.5 10.5 0 1 0 1490.1 249.1" stroke-width="2"/>
<path d="M1480 251.5 V257 H1486.5" stroke-width="2"/>
<path d="M1516 249 L1521 254 M1516 249 V253.5 M1516 249 H1520.5"/>
<path d="M1538.5 249 L1533.5 254 M1538.5 249 V253.5 M1538.5 249 H1534"/>
<path d="M1516 269.5 L1521 264.5 M1516 269.5 V265 M1516 269.5 H1520.5"/>
<path d="M1538.5 269.5 L1533.5 264.5 M1538.5 269.5 V265 M1538.5 269.5 H1534"/>
</g><rect x="1882.5" y="244.5" width="21" height="21" fill="#fff" stroke="#bdbdbd" stroke-width="1"/><path d="M1894.5 255 L1900 249.5 M1896.5 249 H1900.5 V253" fill="none" stroke="#9a9a9a" stroke-width="1.5"/><ellipse cx="1849.7" cy="319" rx="37" ry="19" fill="none" stroke="#dadada" stroke-width="8"/><path d="M1821.7 282.6 L1842.4 271 L1875.6 278.3 L1858.3 292.7 Z" fill="#8e8e8e" stroke="#e8b060" stroke-width="0.8"/><path d="M1821.7 282.6 L1858.3 292.7 L1858.3 329.2 L1824.1 317.7 Z" fill="#858585" stroke="#e8b060" stroke-width="0.8"/><path d="M1858.3 292.7 L1875.6 278.3 L1873.7 310 L1858.3 329.2 Z" fill="#7c7c7c" stroke="#e8b060" stroke-width="0.8"/><text transform="translate(1840 309) rotate(14)" font-size="8.5" fill="#f4f4f4" text-anchor="middle" style="font-family:'Liberation Sans', sans-serif;">VORNE</text><text transform="translate(1867 302) rotate(-60)" font-size="6" fill="#f4f4f4" text-anchor="middle" style="font-family:'Liberation Sans', sans-serif;">RECHTS</text><text transform="translate(1848 283) rotate(10)" font-size="6" fill="#f4f4f4" text-anchor="middle" style="font-family:'Liberation Sans', sans-serif;">OBEN</text><text transform="translate(1825 338) rotate(20)" font-size="11" font-weight="bold" fill="#8a8a8a" text-anchor="middle" style="font-family:'Liberation Sans', sans-serif;">S</text><text transform="translate(1887 329) rotate(-60)" font-size="10" font-weight="bold" fill="#8a8a8a" text-anchor="middle" style="font-family:'Liberation Sans', sans-serif;">E</text><text transform="translate(1817 302) rotate(40)" font-size="7" font-weight="bold" fill="#8a8a8a" text-anchor="middle" style="font-family:'Liberation Sans', sans-serif;">W</text></svg>
</body></html>
